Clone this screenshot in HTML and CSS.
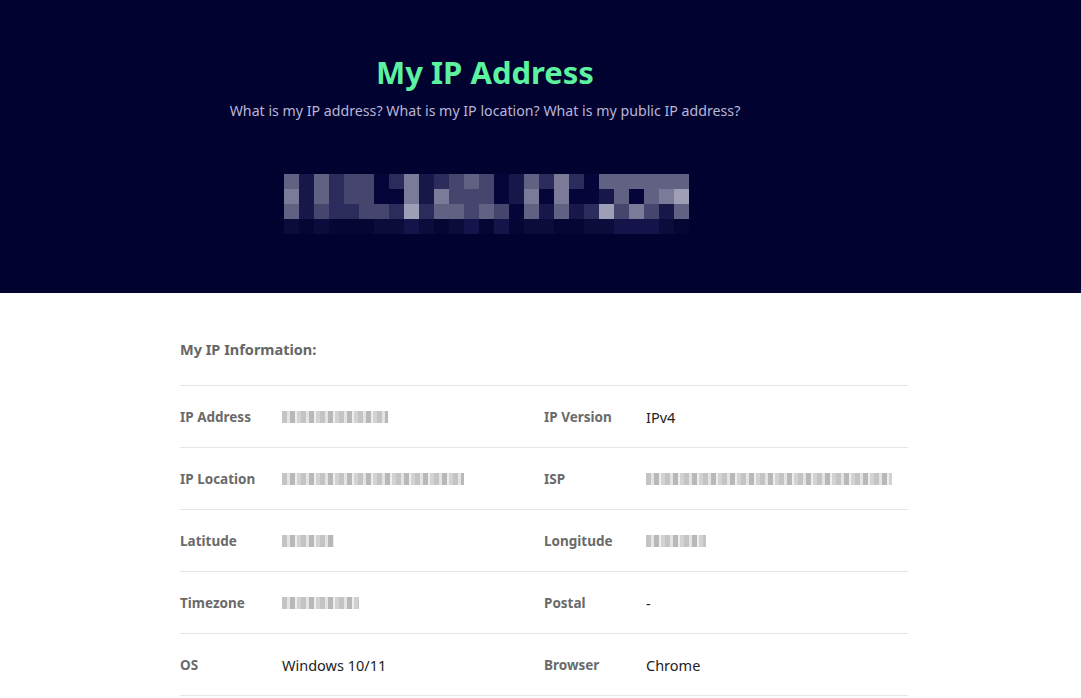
FILE: index.html
```html
<!DOCTYPE html>
<html lang="en">
<head>
  <meta charset="UTF-8">
  <meta name="viewport" content="width=device-width, initial-scale=1.0">
  <title>My IP Address</title>
  <link rel="stylesheet" href="styles.css">
</head>
<body>
  <header class="hero">
    <div class="hero-inner">
      <h1 class="title">My IP Address</h1>
      <p class="subtitle">What is my IP address? What is my IP location? What is my public IP address?</p>
      <div class="ip-mask">
        <i class="l4"></i><i class="l1"></i><i class="l4"></i><i class="l2"></i><i class="l3"></i><i class="l3"></i><i class="l0"></i><i class="l2"></i><i class="l5"></i><i class="l1"></i><i class="l2"></i><i class="l3"></i><i class="l4"></i><i class="l3"></i><i class="l0"></i><i class="l1"></i><i class="l4"></i><i class="l2"></i><i class="l5"></i><i class="l2"></i><i class="l0"></i><i class="l4"></i><i class="l4"></i><i class="l4"></i><i class="l4"></i><i class="l4"></i><i class="l4"></i>
        <i class="l5"></i><i class="l1"></i><i class="l4"></i><i class="l2"></i><i class="l3"></i><i class="l3"></i><i class="l0"></i><i class="l0"></i><i class="l5"></i><i class="l1"></i><i class="l5"></i><i class="l3"></i><i class="l3"></i><i class="l3"></i><i class="l0"></i><i class="l1"></i><i class="l5"></i><i class="l0"></i><i class="l5"></i><i class="l0"></i><i class="l0"></i><i class="l1"></i><i class="l4"></i><i class="l0"></i><i class="l4"></i><i class="l5"></i><i class="l6"></i>
        <i class="l4"></i><i class="l1"></i><i class="l3"></i><i class="l2"></i><i class="l2"></i><i class="l3"></i><i class="l3"></i><i class="l2"></i><i class="l6"></i><i class="l2"></i><i class="l4"></i><i class="l4"></i><i class="l3"></i><i class="l4"></i><i class="l3"></i><i class="l0"></i><i class="l4"></i><i class="l1"></i><i class="l4"></i><i class="l1"></i><i class="l2"></i><i class="l6"></i><i class="l3"></i><i class="l5"></i><i class="l3"></i><i class="l1"></i><i class="l4"></i>
        <i class="f1"></i><i class="f0"></i><i class="f1"></i><i class="f0"></i><i class="f0"></i><i class="f0"></i><i class="f1"></i><i class="f1"></i><i class="f2"></i><i class="f1"></i><i class="f0"></i><i class="f1"></i><i class="f2"></i><i class="f0"></i><i class="f2"></i><i class="f0"></i><i class="f1"></i><i class="f1"></i><i class="f0"></i><i class="f0"></i><i class="f1"></i><i class="f1"></i><i class="f2"></i><i class="f2"></i><i class="f2"></i><i class="f1"></i><i class="f0"></i>
      </div>
    </div>
  </header>

  <main class="info">
    <h2 class="info-title">My IP Information:</h2>
    <div class="info-table">
      <div class="info-row">
        <div class="cell"><span class="label">IP Address</span><span class="value"><span class="blur w-ip"></span></span></div>
        <div class="cell"><span class="label">IP Version</span><span class="value">IPv4</span></div>
      </div>
      <div class="info-row">
        <div class="cell"><span class="label">IP Location</span><span class="value"><span class="blur w-loc"></span></span></div>
        <div class="cell"><span class="label">ISP</span><span class="value"><span class="blur w-isp"></span></span></div>
      </div>
      <div class="info-row">
        <div class="cell"><span class="label">Latitude</span><span class="value"><span class="blur w-lat"></span></span></div>
        <div class="cell"><span class="label">Longitude</span><span class="value"><span class="blur w-lon"></span></span></div>
      </div>
      <div class="info-row">
        <div class="cell"><span class="label">Timezone</span><span class="value"><span class="blur w-tz"></span></span></div>
        <div class="cell"><span class="label">Postal</span><span class="value">-</span></div>
      </div>
      <div class="info-row">
        <div class="cell"><span class="label">OS</span><span class="value">Windows 10/11</span></div>
        <div class="cell"><span class="label">Browser</span><span class="value">Chrome</span></div>
      </div>
    </div>
  </main>
</body>
</html>
```

FILE: styles.css
```css
body {
  margin: 0;
  background: #ffffff;
  font-family: "Trebuchet MS", "Noto Sans", sans-serif;
}

.hero {
  height: 293px;
  background: #020230;
}

.hero-inner {
  width: 970px;
  padding-top: 52px;
  text-align: center;
}

.title {
  margin: 0;
  font-size: 31px;
  font-weight: bold;
  line-height: 40px;
  color: #5cf2a0;
}

.subtitle {
  margin: 9px 0 0;
  font-size: 14.2px;
  line-height: 20px;
  color: #b9b6d6;
}

.ip-mask {
  display: grid;
  grid-template-columns: repeat(27, 15px);
  grid-auto-rows: 15px;
  width: 405px;
  margin: 53px 0 0 284px;
}

.ip-mask i { display: block; }
.ip-mask .l0 { background: #05053a; }
.ip-mask .l1 { background: #17174a; }
.ip-mask .l2 { background: #2b2b5c; }
.ip-mask .l3 { background: #45456e; }
.ip-mask .l4 { background: #616184; }
.ip-mask .l5 { background: #7b7b99; }
.ip-mask .l6 { background: #9e9eb6; }
.ip-mask .f0 { background: #060634; }
.ip-mask .f1 { background: #0c0c3c; }
.ip-mask .f2 { background: #14144a; }

.info {
  width: 728px;
  margin: 0 auto;
  padding: 44px 0 0 7px;
}

.info-title {
  margin: 0 0 24px;
  font-size: 14.5px;
  font-weight: bold;
  line-height: 24px;
  color: #666666;
}

.info-row {
  display: grid;
  grid-template-columns: 1fr 1fr;
  height: 61px;
  border-top: 1px solid #e6e6e6;
}

.info-row:last-child {
  border-bottom: 1px solid #e6e6e6;
}

.cell {
  display: flex;
  align-items: center;
}

.label {
  width: 102px;
  font-size: 13.5px;
  font-weight: bold;
  color: #6a6a6a;
}

.value {
  font-size: 14.5px;
  color: #222222;
}

.blur {
  display: block;
  height: 12px;
  background: repeating-linear-gradient(90deg, #c4c4c4 0 5px, #e4e4e4 5px 8px, #b8b8b8 8px 13px, #eeeeee 13px 15px, #d2d2d2 15px 19px);
  filter: blur(0.6px);
}

.w-ip { width: 106px; }
.w-loc { width: 182px; }
.w-isp { width: 246px; }
.w-lat { width: 52px; }
.w-lon { width: 60px; }
.w-tz { width: 77px; }
```
